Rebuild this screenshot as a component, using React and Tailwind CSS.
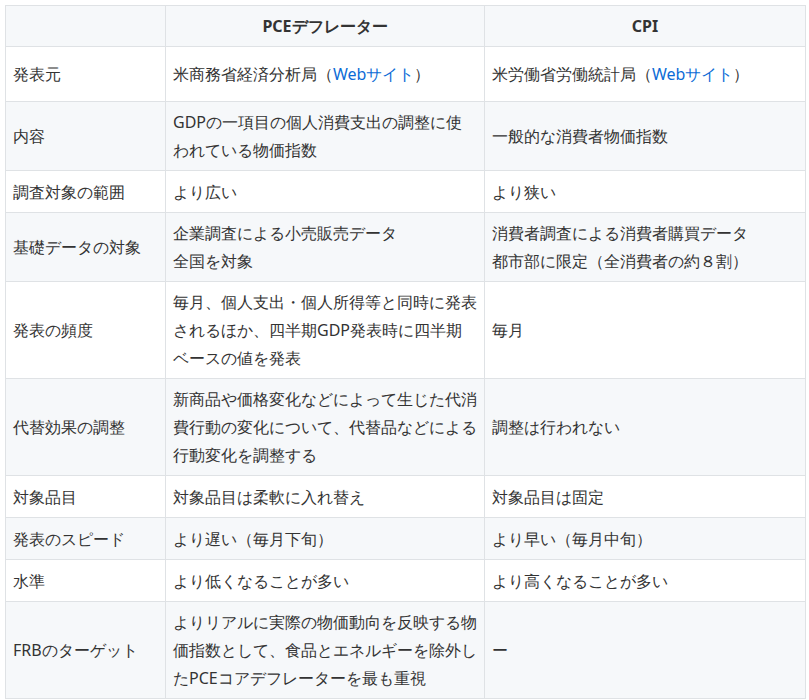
const rows = [
  ["発表元", <>米商務省経済分析局（<a className="text-[#0b6bd6]" href="#">Webサイト</a>）</>, <>米労働省労働統計局（<a className="text-[#0b6bd6]" href="#">Webサイト</a>）</>],
  ["内容", "GDPの一項目の個人消費支出の調整に使われている物価指数", "一般的な消費者物価指数"],
  ["調査対象の範囲", "より広い", "より狭い"],
  ["基礎データの対象", <>企業調査による小売販売データ<br />全国を対象</>, <>消費者調査による消費者購買データ<br />都市部に限定（全消費者の約８割）</>],
  ["発表の頻度", "毎月、個人支出・個人所得等と同時に発表されるほか、四半期GDP発表時に四半期ベースの値を発表", "毎月"],
  ["代替効果の調整", "新商品や価格変化などによって生じた代消費行動の変化について、代替品などによる行動変化を調整する", "調整は行われない"],
  ["対象品目", "対象品目は柔軟に入れ替え", "対象品目は固定"],
  ["発表のスピード", "より遅い（毎月下旬）", "より早い（毎月中旬）"],
  ["水準", "より低くなることが多い", "より高くなることが多い"],
  ["FRBのターゲット", "よりリアルに実際の物価動向を反映する物価指数として、食品とエネルギーを除外したPCEコアデフレーターを最も重視", "ー"],
];

export default function App() {
  return (
    <div className="bg-white p-[5px] font-['Noto_Sans_CJK_JP',sans-serif] text-[16px] leading-[28px] text-[#333]">
      <table className="w-[800px] border-collapse table-fixed">
        <colgroup>
          <col className="w-[160px]" />
          <col className="w-[319px]" />
          <col className="w-[321px]" />
        </colgroup>
        <thead>
          <tr className="bg-[#f6f8fa] h-[41px]">
            <th className="border border-[#dfe2e5]"></th>
            <th className="border border-[#dfe2e5] font-bold text-[16px]">PCEデフレーター</th>
            <th className="border border-[#dfe2e5] font-bold text-[16px]">CPI</th>
          </tr>
        </thead>
        <tbody>
          {rows.map((r, i) => (
            <tr key={i} className={(i % 2 === 1 ? "bg-[#f6f8fa] " : "bg-white ") + (i === 0 ? "h-[55px]" : "h-[42px]")}>
              {r.map((c, j) => (
                <td key={j} className="border border-[#dfe2e5] px-[7px] py-[6px] align-middle">{c}</td>
              ))}
            </tr>
          ))}
        </tbody>
      </table>
    </div>
  );
}
